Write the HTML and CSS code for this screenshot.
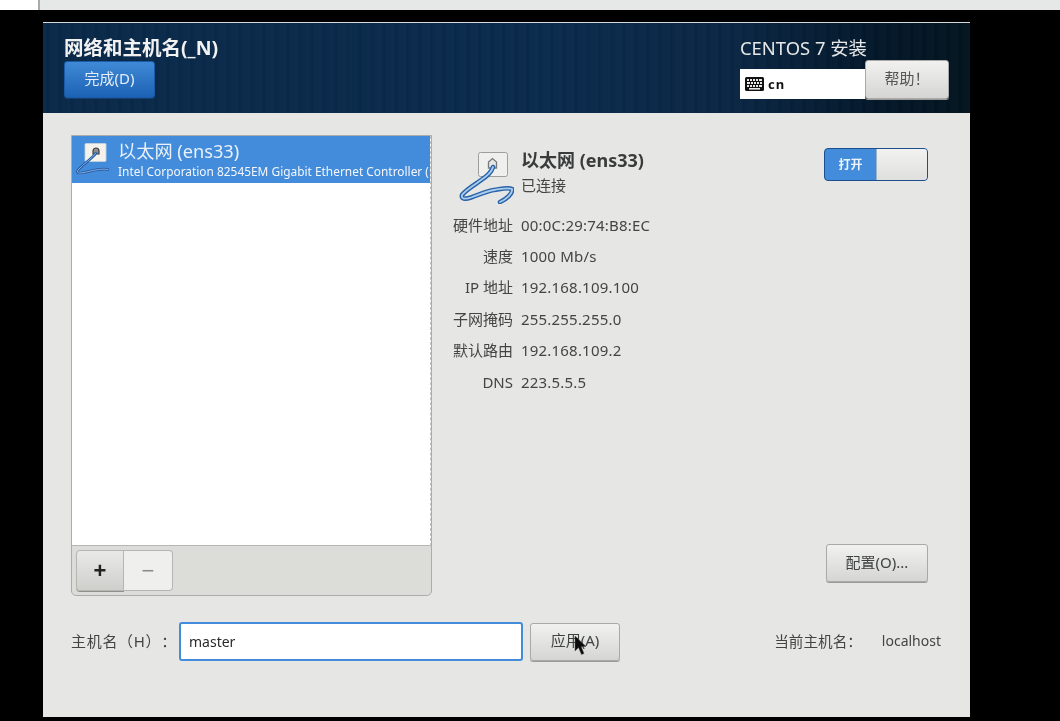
FILE: index.html
```html
<!DOCTYPE html>
<html lang="zh-CN">
<head>
<meta charset="utf-8">
<title>网络和主机名</title>
<link rel="stylesheet" href="styles.css">
</head>
<body>
<div class="topstrip"><div class="topstrip-white"></div><div class="topstrip-rest"></div></div>
<div class="window">
  <header class="header">
    <div class="header-left">
      <div class="spoke-title">网络和主机名(_N)</div>
      <button class="btn btn-done">完成(D)</button>
    </div>
    <div class="header-right">
      <div class="product">CENTOS 7 安装</div>
      <div class="header-controls">
        <div class="kbd">
          <svg class="kbd-icon" width="19" height="14" viewBox="0 0 19 14">
            <rect x="0" y="0" width="19" height="14" rx="1.5" fill="#111"/>
            <g fill="#e8e8e8">
              <rect x="2" y="2" width="2" height="2"/><rect x="5" y="2" width="2" height="2"/><rect x="8" y="2" width="2" height="2"/><rect x="11" y="2" width="2" height="2"/><rect x="14" y="2" width="3" height="2"/>
              <rect x="2" y="5" width="3" height="2"/><rect x="6" y="5" width="2" height="2"/><rect x="9" y="5" width="2" height="2"/><rect x="12" y="5" width="2" height="2"/><rect x="15" y="5" width="2" height="2"/>
              <rect x="2" y="8" width="2" height="2"/><rect x="5" y="8" width="2" height="2"/><rect x="8" y="8" width="2" height="2"/><rect x="11" y="8" width="2" height="2"/><rect x="14" y="8" width="3" height="2"/>
              <rect x="4" y="11" width="11" height="1.6"/>
            </g>
          </svg>
          <span class="kbd-text">cn</span>
        </div>
        <button class="btn btn-help">帮助！</button>
      </div>
    </div>
  </header>

  <main class="content">
    <div class="main-row">
      <section class="devlist">
        <div class="devlist-body">
          <div class="dev-row">
            <svg class="dev-icon" width="34" height="36" viewBox="0 0 34 36">
              <rect x="10" y="1.5" width="21" height="18" rx="1" fill="#f4f2ea" stroke="#c9d2dc" stroke-width=".8"/>
              <path d="M18 9 a3 3 0 0 1 6 0 v3 h-6z" fill="#8f8f8c" stroke="#3c3f44" stroke-width="1.2"/>
              <path d="M21 11 C17 17 8 22 3 28 C1 31 4 31.5 9 30.5 C16 29 26 26 33 27.5" fill="none" stroke="#28599f" stroke-width="2.6" stroke-linecap="round"/>
              <path d="M21 11 C17 17 8 22 3 28 C1 31 4 31.5 9 30.5 C16 29 26 26 33 27.5" fill="none" stroke="#7fb0e6" stroke-width="1" stroke-linecap="round"/>
            </svg>
            <div class="dev-text">
              <div class="dev-name">以太网 (ens33)</div>
              <div class="dev-desc">Intel Corporation 82545EM Gigabit Ethernet Controller (</div>
            </div>
          </div>
        </div>
        <div class="devlist-toolbar">
          <div class="addrem">
            <button class="tool tool-add">+</button>
            <button class="tool tool-remove">−</button>
          </div>
        </div>
      </section>

      <section class="detail">
        <div class="detail-top">
          <div class="detail-info">
            <div class="detail-head">
              <svg class="detail-icon" width="56" height="54" viewBox="0 0 56 54">
                <rect x="20.5" y="2.5" width="29" height="24" rx="2" fill="#efefed" stroke="#9b9f9f"/>
                <path d="M30.5 12 L34.5 8.5 L38.5 12 V18 H30.5Z" fill="#e6e6e4" stroke="#77797c" stroke-width="1.3"/>
                <path d="M35 17 C33 25 24 29 19 33 C13 37 7 41 4 45 C3 49 7 49.5 13 47.5 C21 45 28 41 36 40 C43 39 50 37 54 39 C55 43 49 49 42 52" fill="none" stroke="#2a62a8" stroke-width="4.6" stroke-linecap="round"/>
                <path d="M35 17 C33 25 24 29 19 33 C13 37 7 41 4 45 C3 49 7 49.5 13 47.5 C21 45 28 41 36 40 C43 39 50 37 54 39 C55 43 49 49 42 52" fill="none" stroke="#a9cdef" stroke-width="1.8" stroke-linecap="round"/>
              </svg>
              <div class="detail-titles">
                <div class="detail-name">以太网 (ens33)</div>
                <div class="detail-state">已连接</div>
              </div>
            </div>
            <dl class="props">
              <dt>硬件地址</dt><dd>00:0C:29:74:B8:EC</dd>
              <dt>速度</dt><dd>1000 Mb/s</dd>
              <dt>IP 地址</dt><dd>192.168.109.100</dd>
              <dt>子网掩码</dt><dd>255.255.255.0</dd>
              <dt>默认路由</dt><dd>192.168.109.2</dd>
              <dt>DNS</dt><dd>223.5.5.5</dd>
            </dl>
          </div>
          <div class="switch"><span class="switch-on">打开</span><span class="switch-knob"></span></div>
        </div>
        <button class="btn btn-config">配置(O)...</button>
      </section>
    </div>

    <div class="host-row">
      <label class="host-label">主机名（H）：</label>
      <div class="host-input">master</div>
      <button class="btn btn-apply">应用(A)</button>
      <div class="current">
        <span class="current-label">当前主机名：</span>
        <span class="current-value">localhost</span>
      </div>
    </div>
    <svg class="cursor" width="14" height="22" viewBox="0 0 14 22">
      <path d="M1 1 L1 16 L4.5 12.5 L7.5 19.5 L10 18.5 L7.2 11.8 L12 11.5 Z" fill="#0b0b0b" stroke="#555" stroke-width=".5"/>
    </svg>
  </main>
</div>
</body>
</html>
```

FILE: styles.css
```css
* { box-sizing: border-box; }
html, body { margin: 0; height: 721px; overflow: hidden; }
body {
  background: #000;
  font-family: "Noto Sans", "Noto Sans CJK SC", sans-serif;
  font-size: 15px;
  color: #3a3d3d;
  text-spacing-trim: space-all;
}
button { font-family: inherit; }

.topstrip { display: flex; height: 10px; }
.topstrip-white { width: 38px; background: #fff; }
.topstrip-rest { flex: 1; background: #e6e7e7; border-left: 2px solid #aaa; }

.window {
  margin: 12px 90px 0 43px;
  height: 695px;
  background: #e6e6e5;
  border-top: 1px solid #d8d8d8;
  display: flex;
  flex-direction: column;
  filter: blur(.45px);
  position: relative;
}

.header {
  height: 90px;
  flex: none;
  display: flex;
  justify-content: space-between;
  padding: 13px 21px 0 21px;
  background:
    repeating-linear-gradient(90deg, rgba(255,255,255,.012) 0 3px, rgba(0,0,0,.035) 3px 7px, rgba(255,255,255,.006) 7px 12px),
    linear-gradient(90deg, #0a2949 0%, #0b2b4d 55%, #0a2644 75%, #04182a 90%, #04151f 100%);
}
.spoke-title {
  color: #f2f2f2;
  font-size: 19.5px;
  font-weight: 700;
  line-height: 24px;
  white-space: nowrap;
}
.btn {
  border: 1px solid #a9a9a7;
  border-radius: 3px;
  background: linear-gradient(#f1f1f0, #d5d5d3);
  color: #3f4242;
  font-size: 15px;
  padding: 0 0 4px;
  box-shadow: 0 1px 0 #9b9b9b;
}
.btn-done {
  display: block;
  width: 91px;
  height: 37px;
  margin-top: 1px;
  color: #e4edf7;
  background: linear-gradient(#3f8ad6, #1d62b4);
  border: 1px solid #1a5aa6;
  box-shadow: 0 1px 0 #123f75;
}
.header-right { width: 209px; }
.product {
  color: #e6e8e8;
  font-size: 18.4px;
  line-height: 24px;
  white-space: nowrap;
}
.header-controls { display: flex; align-items: flex-end; height: 39px; }
.kbd {
  width: 125px;
  height: 30px;
  background: #fff;
  display: flex;
  align-items: center;
  padding-left: 5px;
  gap: 4px;
}
.kbd-text { color: #111; font-size: 13px; font-weight: 700; letter-spacing: 1px; }
.btn-help {
  width: 84px;
  height: 39px;
  color: #555;
}

.content {
  flex: 1;
  position: relative;
  padding: 22px 42px 0 28px;
  display: flex;
  flex-direction: column;
}
.main-row { display: flex; height: 461px; gap: 21px; }

.devlist {
  width: 361px;
  flex: none;
  display: flex;
  flex-direction: column;
  border: 1px solid #a9adad;
  border-radius: 0 0 5px 5px;
  background: #dcdcd9;
}
.devlist-body {
  flex: 1;
  background: #fff;
  border-bottom: 1px solid #b5b5b2;
  border-right: 1px dashed #c4c4c4;
}
.dev-row {
  height: 47px;
  background: #438cdc;
  display: flex;
  align-items: center;
  padding-left: 3px;
  gap: 9px;
  color: #f3f6fa;
  overflow: hidden;
}
.dev-icon { flex: none; }
.dev-text { min-width: 0; white-space: nowrap; overflow: hidden; margin-top: -1px; }
.dev-name { font-size: 18.2px; line-height: 24px; color: #eaf1f9; }
.dev-desc { font-size: 11.9px; line-height: 16px; }

.devlist-toolbar { height: 49px; flex: none; padding: 4px; }
.addrem { display: flex; width: 97px; height: 41px; }
.tool {
  height: 41px;
  border: 1px solid #b5b5b2;
  padding: 0;
  font-family: "Liberation Sans", sans-serif;
  font-size: 22px;
  line-height: 1;
}
.tool-add {
  width: 48px;
  border-radius: 4px 0 0 4px;
  background: linear-gradient(#e9e9e7, #cfcfcc);
  color: #222;
  font-weight: 700;
  box-shadow: 0 1px 0 #8f8f8d;
}
.tool-remove {
  width: 49px;
  border-left: 0;
  border-radius: 0 4px 4px 0;
  background: #efefee;
  color: #8a8c8c;
}

.detail {
  flex: 1;
  display: flex;
  flex-direction: column;
  align-items: flex-end;
  justify-content: space-between;
  padding-bottom: 14px;
}
.detail-top { display: flex; width: 100%; justify-content: space-between; padding-top: 13px; }
.detail-info { display: flex; flex-direction: column; }
.detail-head { display: flex; gap: 8px; padding-left: 5px; padding-top: 2px; height: 61px; }
.detail-icon { flex: none; }
.detail-titles { margin: -2px 0 0 -1px; }
.detail-name { font-size: 18px; line-height: 24px; font-weight: 700; color: #3a3c3c; white-space: nowrap; }
.detail-state { line-height: 24px; color: #444; margin-top: 1px; }
.props {
  margin: 0;
  display: grid;
  grid-template-columns: 60px auto;
  column-gap: 8px;
  grid-auto-rows: 31.4px;
  align-items: center;
  line-height: 20px;
  color: #444;
}
.props dt { text-align: right; white-space: nowrap; }
.props dd { margin: 0; letter-spacing: .2px; white-space: nowrap; }

.switch {
  width: 104px;
  height: 33px;
  display: flex;
  border: 1px solid #1d4f8c;
  border-radius: 4px;
  overflow: hidden;
  flex: none;
  background: #438cdc;
}
.switch-on {
  width: 51px;
  color: #eef4fb;
  font-size: 12px;
  font-weight: 700;
  line-height: 31px;
  text-align: center;
}
.switch-knob {
  flex: 1;
  background: linear-gradient(#f2f2f1, #dfdfdd);
  border-left: 1px solid #9fb3c8;
}
.btn-config { width: 102px; height: 38px; }

.host-row { display: flex; align-items: center; height: 39px; margin-top: 26px; }
.host-label { width: 108px; flex: none; color: #444; white-space: nowrap; margin-top: -2px; letter-spacing: .7px; }
.host-input {
  width: 344px;
  height: 39px;
  background: #fff;
  border: 2px solid #438cdc;
  border-radius: 3px;
  padding-left: 8px;
  line-height: 35px;
  color: #2a2a2a;
  font-size: 14px;
}
.btn-apply { width: 90px; height: 38px; margin-left: 7px; flex: none; }
.current { margin-left: auto; margin-right: -13px; display: flex; gap: 20px; color: #444; margin-top: -2px; align-items: center; }
.current-label { font-size: 14.6px; }
.current-value { font-size: 14px; }
.cursor { position: absolute; left: 531px; top: 522px; }
```
